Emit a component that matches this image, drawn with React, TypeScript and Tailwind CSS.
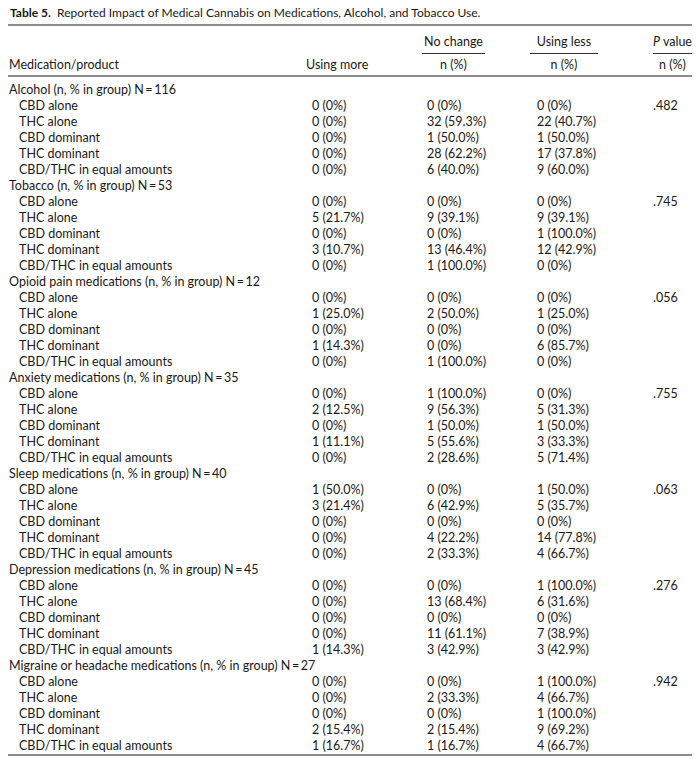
import React from "react";

type Row = [string, string, string];
type Group = { label: string; n: string; p: string; rows: Row[] };

const subs = ["CBD alone", "THC alone", "CBD dominant", "THC dominant", "CBD/THC in equal amounts"];

const groups: Group[] = [
  {
    label: "Alcohol (n, % in group)",
    n: "116",
    p: ".482",
    rows: [
      ["0 (0%)", "0 (0%)", "0 (0%)"],
      ["0 (0%)", "32 (59.3%)", "22 (40.7%)"],
      ["0 (0%)", "1 (50.0%)", "1 (50.0%)"],
      ["0 (0%)", "28 (62.2%)", "17 (37.8%)"],
      ["0 (0%)", "6 (40.0%)", "9 (60.0%)"],
    ],
  },
  {
    label: "Tobacco (n, % in group)",
    n: "53",
    p: ".745",
    rows: [
      ["0 (0%)", "0 (0%)", "0 (0%)"],
      ["5 (21.7%)", "9 (39.1%)", "9 (39.1%)"],
      ["0 (0%)", "0 (0%)", "1 (100.0%)"],
      ["3 (10.7%)", "13 (46.4%)", "12 (42.9%)"],
      ["0 (0%)", "1 (100.0%)", "0 (0%)"],
    ],
  },
  {
    label: "Opioid pain medications (n, % in group)",
    n: "12",
    p: ".056",
    rows: [
      ["0 (0%)", "0 (0%)", "0 (0%)"],
      ["1 (25.0%)", "2 (50.0%)", "1 (25.0%)"],
      ["0 (0%)", "0 (0%)", "0 (0%)"],
      ["1 (14.3%)", "0 (0%)", "6 (85.7%)"],
      ["0 (0%)", "1 (100.0%)", "0 (0%)"],
    ],
  },
  {
    label: "Anxiety medications (n, % in group)",
    n: "35",
    p: ".755",
    rows: [
      ["0 (0%)", "1 (100.0%)", "0 (0%)"],
      ["2 (12.5%)", "9 (56.3%)", "5 (31.3%)"],
      ["0 (0%)", "1 (50.0%)", "1 (50.0%)"],
      ["1 (11.1%)", "5 (55.6%)", "3 (33.3%)"],
      ["0 (0%)", "2 (28.6%)", "5 (71.4%)"],
    ],
  },
  {
    label: "Sleep medications (n, % in group)",
    n: "40",
    p: ".063",
    rows: [
      ["1 (50.0%)", "0 (0%)", "1 (50.0%)"],
      ["3 (21.4%)", "6 (42.9%)", "5 (35.7%)"],
      ["0 (0%)", "0 (0%)", "0 (0%)"],
      ["0 (0%)", "4 (22.2%)", "14 (77.8%)"],
      ["0 (0%)", "2 (33.3%)", "4 (66.7%)"],
    ],
  },
  {
    label: "Depression medications (n, % in group)",
    n: "45",
    p: ".276",
    rows: [
      ["0 (0%)", "0 (0%)", "1 (100.0%)"],
      ["0 (0%)", "13 (68.4%)", "6 (31.6%)"],
      ["0 (0%)", "0 (0%)", "0 (0%)"],
      ["0 (0%)", "11 (61.1%)", "7 (38.9%)"],
      ["1 (14.3%)", "3 (42.9%)", "3 (42.9%)"],
    ],
  },
  {
    label: "Migraine or headache medications (n, % in group)",
    n: "27",
    p: ".942",
    rows: [
      ["0 (0%)", "0 (0%)", "1 (100.0%)"],
      ["0 (0%)", "2 (33.3%)", "4 (66.7%)"],
      ["0 (0%)", "0 (0%)", "1 (100.0%)"],
      ["2 (15.4%)", "2 (15.4%)", "9 (69.2%)"],
      ["1 (16.7%)", "1 (16.7%)", "4 (66.7%)"],
    ],
  },
];

export default function App() {
  return (
    <div
      className="w-[700px] h-[765px] bg-white text-[#1a1718] text-[12.5px] leading-[16px] px-[8px] pt-[5px]"
      style={{ fontFamily: "Lato, 'Open Sans', sans-serif" }}
    >
      <div className="h-[16px] pl-[2px] whitespace-nowrap text-[12px]">
        <span className="font-bold">Table 5.</span>
        <span>&nbsp; Reported Impact of Medical Cannabis on Medications, Alcohol, and Tobacco Use.</span>
      </div>
      <div className="mt-[3px] h-[2px] bg-[#8c8c8c]" />

      {/* header line 1 */}
      <div className="mt-[8px] flex">
        <div className="w-[414px]" />
        <div className="w-[63px] text-center pb-[3px] border-b border-[#333] whitespace-nowrap">No change</div>
        <div className="w-[45px]" />
        <div className="w-[68px] text-center pb-[3px] border-b border-[#333] whitespace-nowrap">Using less</div>
        <div className="w-[55px]" />
        <div className="w-[39px] text-center pb-[3px] border-b border-[#333] whitespace-nowrap">
          <span className="italic">P</span> value
        </div>
      </div>
      {/* header line 2 */}
      <div className="mt-[3px] flex h-[16px]">
        <div className="w-[298px] pl-[1px]">Medication/product</div>
        <div className="w-[116px] whitespace-nowrap">Using more</div>
        <div className="w-[63px] text-center whitespace-nowrap">n (%)</div>
        <div className="w-[45px]" />
        <div className="w-[68px] text-center whitespace-nowrap">n (%)</div>
        <div className="w-[55px]" />
        <div className="w-[39px] text-center whitespace-nowrap">n (%)</div>
      </div>
      <div className="mt-[2px] h-[2px] bg-[#8c8c8c]" />

      <div className="mt-[5px]">
        {groups.map((g) => (
          <div key={g.label}>
            <div className="h-[16px] pl-[1px] whitespace-nowrap">
              {g.label} N{"\u2009=\u2009"}
              {g.n}
            </div>
            {g.rows.map((r, i) => (
              <div key={i} className="flex h-[16px] whitespace-nowrap">
                <div className="w-[304px] pl-[11px]">{subs[i]}</div>
                <div className="w-[115px]">{r[0]}</div>
                <div className="w-[110px]">{r[1]}</div>
                <div className="w-[116px]">{r[2]}</div>
                <div className="flex-1">{i === 0 ? g.p : ""}</div>
              </div>
            ))}
          </div>
        ))}
      </div>
      <div className="h-[2px] bg-[#8c8c8c]" />
    </div>
  );
}
